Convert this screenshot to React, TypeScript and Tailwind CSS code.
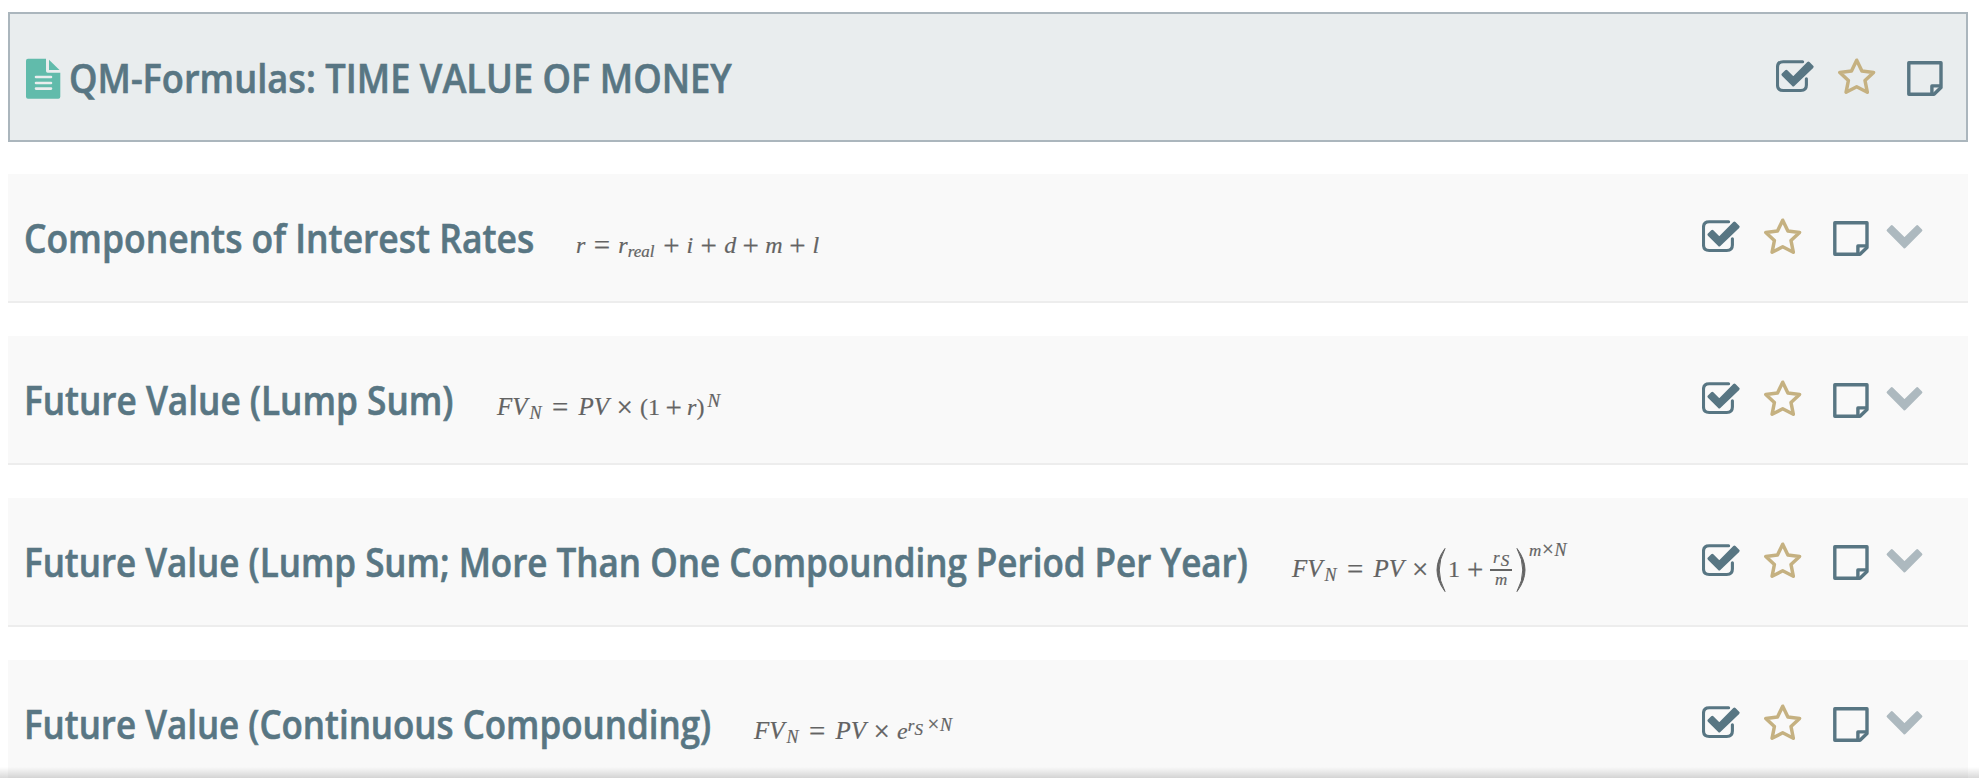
import React from "react";

function DocIcon() {
  return (
    <svg width="35" height="42" viewBox="0 0 35 42" className="block shrink-0">
      <path d="M2 .7H20V13Q20 14.7 21.7 14.7H34.3V38.7Q34.3 40.7 32.3 40.7H2Q0 40.7 0 38.7V2.7Q0 .7 2 .7Z" fill="#61bbab" />
      <path d="M23 1.7L33.5 12H23Z" fill="#61bbab" />
      <path d="M10 19H25M10 25H25M10 30.6H25" stroke="#e9edee" strokeWidth="2.6" strokeLinecap="round" />
    </svg>
  );
}

function CheckIcon() {
  return (
    <svg width="38" height="34" viewBox="0 0 38 34" className="block shrink-0" fill="none" stroke="#587683">
      <path d="M26.6 1.7H7.2Q1.5 1.7 1.5 7.2V25Q1.5 30.5 7.2 30.5H24.8Q30.4 30.5 30.4 25V18.8" strokeWidth="3.1" strokeLinecap="round" />
      <path d="M7 14.6L10.3 11.3L17.3 18.3L32.4 3.1L36.1 6.8L17.3 25Z" fill="#587683" strokeWidth="3" strokeLinejoin="round" />
    </svg>
  );
}

function StarIcon() {
  return (
    <svg width="38" height="38" viewBox="0 0 38 38" className="block shrink-0" fill="none" stroke="#c5b181">
      <path d="M18.7 2.2L23.9 13L35.6 14.4L27 22.5L29.3 34.2L18.7 28.8L8.1 34.2L10.4 22.5L1.8 14.4L13.5 13Z" strokeWidth="3.5" strokeLinejoin="round" />
    </svg>
  );
}

function NoteIcon() {
  return (
    <svg width="36" height="36" viewBox="0 0 36 36" className="block shrink-0" fill="none" stroke="#587683" strokeWidth="3.4" strokeLinejoin="round">
      <path d="M1.8 1.8H34V26.5L27 33.3H1.8Z" />
      <path d="M34 24.9H24.9V33.3" />
    </svg>
  );
}

function ChevronIcon() {
  return (
    <svg width="38" height="26" viewBox="0 0 38 26" className="block shrink-0">
      <path d="M1.9 6.3L5.8 2.4L18.5 15L31.2 2.4L35.1 6.3L18.5 23.2Z" fill="#adb9bf" stroke="#adb9bf" strokeWidth="2.6" strokeLinejoin="round" />
    </svg>
  );
}

function Actions() {
  return (
    <div className="flex items-start">
      <div className="mt-[2px]"><CheckIcon /></div>
      <div className="ml-[24px]"><StarIcon /></div>
      <div className="ml-[31px] mt-[3px]"><NoteIcon /></div>
    </div>
  );
}

const titleFont = "shrink-0 whitespace-nowrap font-['Open_Sans'] text-[39px] leading-[52px] font-semibold text-[#587683] [-webkit-text-stroke:0.6px_#587683]";

function Op({ className, children }: { className: string; children: React.ReactNode }) {
  return <span className={`relative top-[2px] inline-block text-center text-[29px] leading-[20px] ${className}`}>{children}</span>;
}

function FVN({ times }: { times: string }) {
  return (
    <>
      <i className="text-[25px]">FV</i>
      <i className="relative top-[4px] ml-[2px] text-[18px]">N</i>
      <Op className="w-[37px]">=</Op>
      <i className="text-[25px]">PV</i>
      <Op className={times}>×</Op>
    </>
  );
}

type RowProps = { title: string; boxClass: string; textClass: string; children: React.ReactNode };

function Row({ title, boxClass, textClass, children }: RowProps) {
  return (
    <section className="mb-[33px] flex h-[129px] items-start border-b-2 border-[#ededed] bg-[#f9f9f9] pl-[16px]">
      <h2 className={`mt-[38px] ${titleFont} ${boxClass}`}><span className={`inline-block origin-left ${textClass}`}>{title}</span></h2>
      <div className="mt-[55px] flex h-[32px] items-baseline whitespace-nowrap font-['Liberation_Serif'] text-[24px] leading-[32px] text-[#636363] [-webkit-text-stroke:0.2px_#636363]">{children}</div>
      <div className="ml-auto mt-[44px] mr-[44px] flex items-start">
        <Actions />
        <div className="ml-[17px] mt-[6px]"><ChevronIcon /></div>
      </div>
    </section>
  );
}

export default function App() {
  return (
    <main className="relative h-[780px] w-[1979px] overflow-hidden bg-white pl-[8px] pr-[11px] pt-[12px]">
      <header className="mb-[32px] flex h-[130px] items-start border-2 border-[#abb6bd] bg-[#e9edee] pl-[16px] pr-[23px]">
        <div className="mt-[44px]"><DocIcon /></div>
        <h1 className={`ml-[8px] mt-[38px] ${titleFont}`}><span className="inline-block origin-left scale-x-[.929]">QM-Formulas: TIME VALUE OF MONEY</span></h1>
        <div className="ml-auto mt-[44px]"><Actions /></div>
      </header>
      <Row title="Components of Interest Rates" boxClass="w-[552px]" textClass="scale-x-[.909]">
        <i>r</i><Op className="w-[33px]">=</Op><i>r</i><i className="relative top-[4px] text-[17px]">real</i>
        <Op className="ml-[2px] w-[30px]">+</Op><i>i</i><Op className="w-[31px]">+</Op><i>d</i><Op className="w-[29px]">+</Op><i>m</i><Op className="w-[30px]">+</Op><i>l</i>
      </Row>
      <Row title="Future Value (Lump Sum)" boxClass="w-[473px]" textClass="scale-x-[.902]">
        <FVN times="w-[31px]" />(1<Op className="w-[27px]">+</Op><i>r</i>)<i className="relative top-[-8px] ml-[3px] text-[19px]">N</i>
      </Row>
      <Row title="Future Value (Lump Sum; More Than One Compounding Period Per Year)" boxClass="w-[1268px]" textClass="scale-x-[.897]">
        <FVN times="w-[32px]" />
        <svg width="10" height="44" viewBox="0 0 10 44" className="relative top-px shrink-0 self-center"><path d="M9 .5Q-7 22 9 43.5Q-2.5 22 9 .5Z" fill="#636363" stroke="#636363" /></svg>
        <span className="ml-[2px]">1</span><Op className="w-[30px]">+</Op>
        <span className="relative top-px flex w-[22px] flex-col items-center self-center text-[17px] leading-[17px]">
          <span className="flex h-[19px] w-full justify-center border-b-2 border-[#636363]"><i className="relative top-[-3px]">r</i><i className="relative ml-[1px]">S</i></span>
          <i>m</i>
        </span>
        <svg width="10" height="44" viewBox="0 0 10 44" className="relative top-px ml-[4px] shrink-0 self-center"><path d="M1 .5Q17 22 1 43.5Q12.5 22 1 .5Z" fill="#636363" stroke="#636363" /></svg>
        <span className="relative top-[-21px] ml-[3px] text-[17px]"><i>m</i><span className="inline-block w-[13px] text-center text-[21px] leading-none">×</span><i className="text-[18px]">N</i></span>
      </Row>
      <Row title="Future Value (Continuous Compounding)" boxClass="w-[730px]" textClass="scale-x-[.896]">
        <FVN times="w-[31px]" /><i>e</i><span className="relative top-[-8px] text-[17px]"><i>r</i><i className="relative top-[4px]">S</i><span className="ml-[4px] inline-block w-[13px] text-center text-[21px] leading-none">×</span><i className="text-[18px]">N</i></span>
      </Row>
      <div className="absolute inset-x-0 bottom-0 h-[13px] border-b-2 border-white bg-gradient-to-b from-transparent to-black/15" />
    </main>
  );
}
